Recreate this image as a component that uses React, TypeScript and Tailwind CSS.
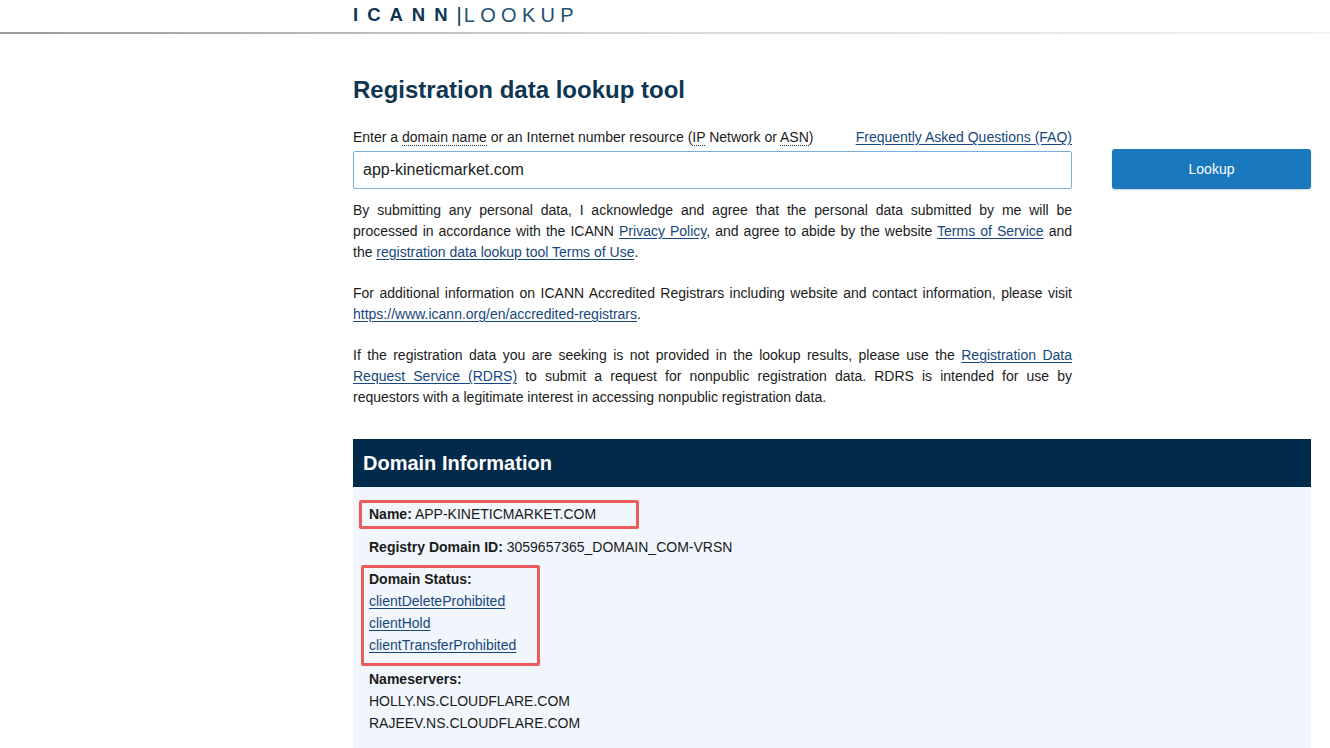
import React from "react";

const linkCls = "text-[#17477c] underline underline-offset-2";

const Abbr = ({ children }: { children: React.ReactNode }) => (
  <span className="border-b border-dotted border-[#333]">{children}</span>
);

const App = () => {
  return (
    <div className="min-h-[748px] bg-white font-['Liberation_Sans',Arial,sans-serif] text-[#1b1b1b]">
      <header className="h-[34px] relative">
        <div className="pl-[353px] pt-[3px] flex items-center text-[#0e3552] leading-[24px]">
          <span className="text-[18.5px] font-bold tracking-[9px]">ICANN</span>
          <span className="text-[20px] font-light mr-[2px]">|</span>
          <span className="text-[20px] tracking-[5.3px] font-normal text-[#24506f]">LOOKUP</span>
        </div>
        <div className="absolute left-0 right-0 bottom-0 h-[2px] bg-gradient-to-r from-[#9a9a9a] via-[#d8d8d8] to-[#f2f2f2]" />
      </header>

      <main className="pl-[353px] pr-[19px]">
        <h1 className="mt-[42px] text-[24px] leading-[28px] font-bold text-[#0e3552]">
          Registration data lookup tool
        </h1>

        <div className="mt-[24px] flex items-start gap-[40px]">
          <div className="w-[719px] shrink-0">
            <div className="flex justify-between text-[14px] leading-[18px]">
              <span>
                Enter a <Abbr>domain name</Abbr> or an Internet number resource (<Abbr>IP</Abbr> Network or{" "}
                <Abbr>ASN</Abbr>)
              </span>
              <a className={linkCls} href="#">
                Frequently Asked Questions (FAQ)
              </a>
            </div>
            <div className="mt-[5px] h-[38px] border border-[#78b0da] rounded-[2px] flex items-center px-[9px] text-[16px] text-[#222]">
              app-kineticmarket.com
            </div>
            <div className="mt-[11px] text-[14px] leading-[21px] text-justify">
              <p>
                By submitting any personal data, I acknowledge and agree that the personal data submitted by me will be
                processed in accordance with the ICANN{" "}
                <a className={linkCls} href="#">
                  Privacy Policy
                </a>
                , and agree to abide by the website{" "}
                <a className={linkCls} href="#">
                  Terms of Service
                </a>{" "}
                and the{" "}
                <a className={linkCls} href="#">
                  registration data lookup tool Terms of Use
                </a>
                .
              </p>
              <p className="mt-[20px]">
                For additional information on ICANN Accredited Registrars including website and contact information, please
                visit{" "}
                <a className={linkCls} href="#">
                  https://www.icann.org/en/accredited-registrars
                </a>
                .
              </p>
              <p className="mt-[20px]">
                If the registration data you are seeking is not provided in the lookup results, please use the{" "}
                <a className={linkCls} href="#">
                  Registration Data Request Service (RDRS)
                </a>{" "}
                to submit a request for nonpublic registration data. RDRS is intended for use by requestors with a
                legitimate interest in accessing nonpublic registration data.
              </p>
            </div>
          </div>
          <button className="mt-[21px] w-[199px] h-[40px] rounded-[3px] bg-[#1a78bd] text-white text-[14px] shadow-[0_1px_2px_rgba(0,0,0,0.2)]">
            Lookup
          </button>
        </div>

        <section className="mt-[31px]">
          <div className="h-[48px] bg-[#022b4b] flex items-center px-[10px]">
            <h2 className="text-white text-[20px] font-bold">Domain Information</h2>
          </div>
          <div className="bg-[#f0f6fb] pl-[6px] pt-[13px] pb-[16px] text-[14px] text-[#1b1b1b]">
            <div className="inline-block border-[3px] border-[#ec5b5b] rounded-[2px] pl-[7px] pr-[40px] py-[2px] leading-[19px]">
              <b>Name:</b> APP-KINETICMARKET.COM
            </div>
            <div className="pl-[10px] mt-[7px] leading-[22px]">
              <b>Registry Domain ID:</b> 3059657365_DOMAIN_COM-VRSN
            </div>
            <div className="mt-[7px] ml-[2px] inline-block border-[3px] border-[#ec5b5b] rounded-[2px] pl-[5px] pr-[21px] pb-[7px] leading-[22px]">
              <div className="font-bold">Domain Status:</div>
              <div>
                <a className={linkCls} href="#">clientDeleteProhibited</a>
              </div>
              <div>
                <a className={linkCls} href="#">clientHold</a>
              </div>
              <div>
                <a className={linkCls} href="#">clientTransferProhibited</a>
              </div>
            </div>
            <div className="pl-[10px] mt-[2px] leading-[22px]">
              <div className="font-bold">Nameservers:</div>
              <div>HOLLY.NS.CLOUDFLARE.COM</div>
              <div>RAJEEV.NS.CLOUDFLARE.COM</div>
            </div>
          </div>
        </section>
      </main>
    </div>
  );
};

export default App;
